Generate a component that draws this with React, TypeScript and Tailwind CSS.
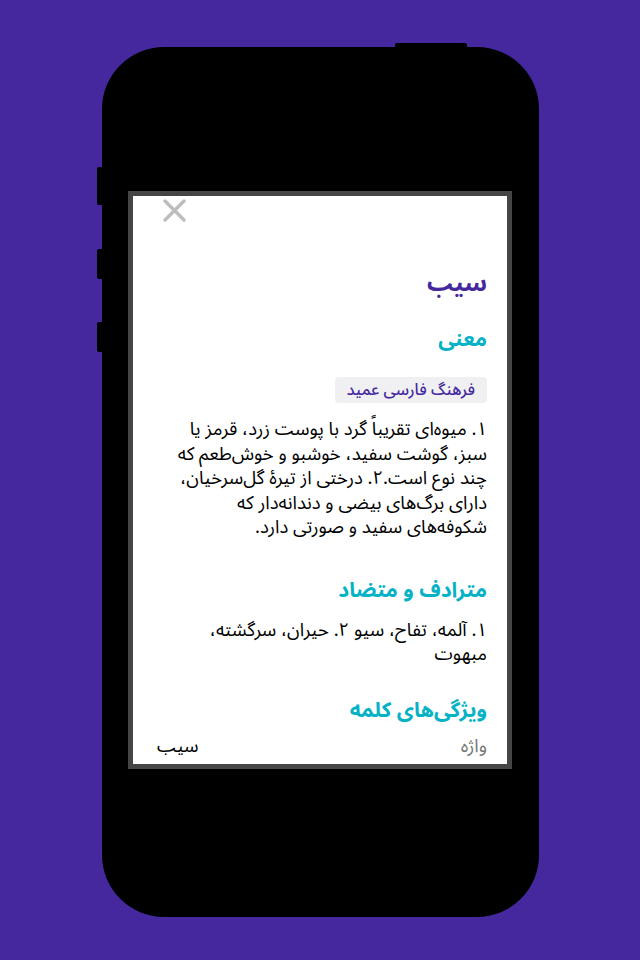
const font = { fontFamily: '"Noto Sans Arabic", "Noto Sans Arabic UI", "Vazirmatn", sans-serif' };

function Section({ title, className, children }: { title: string; className: string; children: React.ReactNode }) {
  return (
    <div className={className}>
      <h2 className="text-[21px] font-bold text-[#06b2c6] leading-[32px]">{title}</h2>
      {children}
    </div>
  );
}

export default function App() {
  return (
    <div className="w-full h-[960px] bg-[#45289e] overflow-hidden" style={font}>
      <div className="relative ml-[102px] mt-[47px] w-[437px] h-[870px] rounded-[62px] bg-black pt-[144px] pl-[26px]">
        {/* top and side buttons */}
        <div className="absolute -top-[4px] left-[293px] w-[72px] h-[5px] rounded-t-[2px] bg-black" />
        <div className="absolute top-[120px] -left-[5px] w-[6px] h-[38px] rounded-l-[2px] bg-black" />
        <div className="absolute top-[202px] -left-[5px] w-[6px] h-[30px] rounded-l-[2px] bg-black" />
        <div className="absolute top-[275px] -left-[5px] w-[6px] h-[30px] rounded-l-[2px] bg-black" />

        <div className="w-[384px] h-[578px] border-[5px] border-[#454545] bg-white overflow-hidden">
          <div dir="rtl" className="pr-[20px] pl-[24px] text-[18.5px] leading-[24.5px] text-black">
            <div className="flex justify-end pt-[3px] pl-[6px]">
              <svg width="23" height="23" viewBox="0 0 23 23" className="text-[#bdbdbd]">
                <path d="M2 2L21 21M21 2L2 21" stroke="currentColor" strokeWidth="3.4" strokeLinecap="round" />
              </svg>
            </div>

            <h1 className="mt-[44px] text-[24px] font-bold text-[#45289e] leading-[36px]">سیب</h1>

            <Section title="معنی" className="mt-[21px]">
              <div className="mt-[22px] flex">
                <span className="rounded-[4px] bg-[#f0f0f2] px-[12px] py-[2px] text-[16px] font-medium leading-[22px] text-[#45289e]">
                  فرهنگ فارسی عمید
                </span>
              </div>
              <p className="mt-[15px]">
                ۱. میوه‌ای تقریباً گرد با پوست زرد، قرمز یا سبز، گوشت سفید، خوشبو و خوش‌طعم که چند نوع است.۲. درختی از تیرهٔ گل‌سرخیان، دارای برگ‌های بیضی و دندانه‌دار که شکوفه‌های سفید و صورتی دارد.
              </p>
            </Section>

            <Section title="مترادف و متضاد" className="mt-[33px]">
              <p className="mt-[13px]">۱. آلمه، تفاح، سیو ۲. حیران، سرگشته، مبهوت</p>
            </Section>

            <Section title="ویژگی‌های کلمه" className="mt-[26px]">
              <div className="mt-[9px] flex justify-between">
                <span className="text-[#757575]">واژه</span>
                <span>سیب</span>
              </div>
            </Section>
          </div>
        </div>
      </div>
    </div>
  );
}
